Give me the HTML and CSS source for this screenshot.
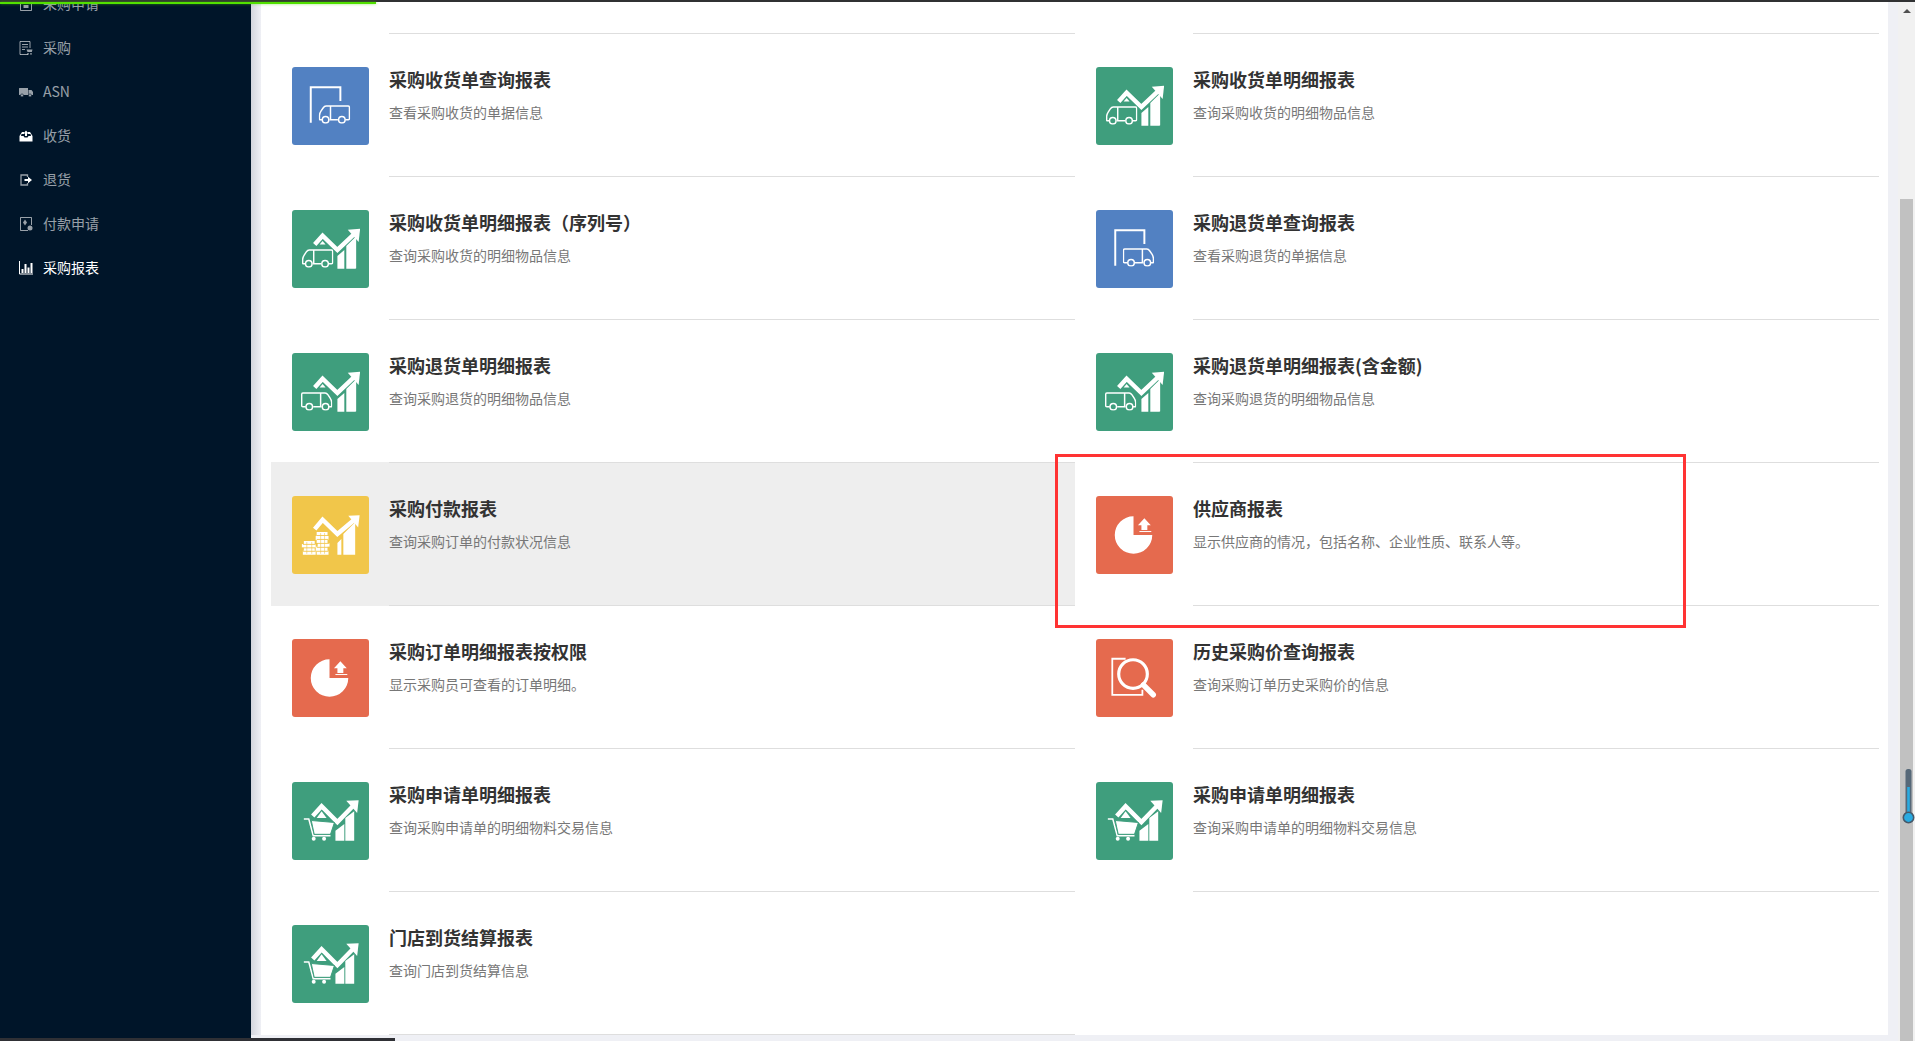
FILE: index.html
```html
<!DOCTYPE html>
<html lang="zh-CN">
<head>
<meta charset="utf-8">
<title>采购报表</title>
<link rel="stylesheet" href="styles.css">
</head>
<body>
<svg class="sprite" aria-hidden="true">
  <symbol id="chart" viewBox="0 0 78 78">
    <path d="M23 34.500 31 25.500 46 40 64 23" fill="none" stroke="#fff" stroke-width="4.500"/>
    <path d="M56.500 19.500 69 18.500 67.500 32Z" fill="#fff"/>
    <path d="M31 31 34 34.500H28Z" fill="#fff"/>
    <path d="M46 46 53 40V59H46ZM55 36 65 26V58.500Q65 59 64 59H55Z" fill="#fff"/>
  </symbol>
  <symbol id="truck-l" viewBox="0 0 32 19">
    <path d="M3.500 15H1.500Q.8 15 .8 14V10.500Q.8 8.500 2.500 6L4.500 3Q5.800 1 7.500 1H30Q31.200 1 31.200 2.500V14Q31.200 15 30 15H27M19.500 15H11M12 1V15" fill="none" stroke="#fff" stroke-width="1.500" stroke-linejoin="round"/>
    <circle cx="7" cy="15" r="3.300" fill="none" stroke="#fff" stroke-width="1.500"/>
    <circle cx="23.500" cy="15" r="3.300" fill="none" stroke="#fff" stroke-width="1.500"/>
  </symbol>
  <symbol id="truck-r" viewBox="0 0 32 19">
    <use href="#truck-l" width="32" height="19" transform="matrix(-1 0 0 1 32 0)"/>
  </symbol>
  <symbol id="dock-l" viewBox="0 0 78 78">
    <path d="M19 56V20H49V34" fill="none" stroke="#fff" stroke-width="2"/>
    <use href="#truck-l" x="27" y="38" width="32" height="19"/>
  </symbol>
  <symbol id="dock-r" viewBox="0 0 78 78">
    <path d="M19.500 56V20H49V34" fill="none" stroke="#fff" stroke-width="2"/>
    <use href="#truck-r" x="27" y="38" width="32" height="19"/>
  </symbol>
  <symbol id="truck-chart-l" viewBox="0 0 78 78">
    <use href="#chart" width="78" height="78"/>
    <use href="#truck-l" x="10" y="39" width="32" height="19"/>
  </symbol>
  <symbol id="truck-chart-r" viewBox="0 0 78 78">
    <use href="#chart" width="78" height="78"/>
    <use href="#truck-r" x="9" y="39" width="32" height="19"/>
  </symbol>
  <symbol id="coins-chart" viewBox="0 0 78 78">
    <path d="M23 33 31 23.500 46 38 65 22" fill="none" stroke="#fff" stroke-width="4.500"/>
    <path d="M57 19.500 68.500 19 67 31.500Z" fill="#fff"/>
    <path d="M46 47 50 43V59H46ZM52 38 64 26V59H52Z" fill="#fff"/>
    <path d="M12 45H23V48H24V52H23V55H24V59H11V55H12V52H10V48H12ZM25 36H36V40H37V44H36V47H38V51H36V55H37V59H25V55H24V51H26V47H25V44H24V40H25Z" fill="#fff"/>
    <path d="M11 48.500H24M10 52H24M11 55.500H24M25 39.500H37M25 43.500H37M25 47.500H38M25 51.500H38M25 55.500H37" stroke="#f1c64a" stroke-width=".9"/>
    <path d="M15 46V58M20 46V58M29 37V58M33 37V58" stroke="#f1c64a" stroke-width=".6"/>
  </symbol>
  <symbol id="pie" viewBox="0 0 78 78">
    <path d="M38 39V20A19 19 0 1 0 57 39Z" fill="#fff"/>
    <path d="M49 22 55.500 29H52V34H46V29H42.500Z" fill="#fff"/>
    <path d="M44 35.500H56" stroke="#fff"/>
  </symbol>
  <symbol id="search" viewBox="0 0 78 78">
    <path d="M30 19.500H16.500V56H47V51" fill="none" stroke="#fff" stroke-width="1.800"/>
    <circle cx="37.500" cy="35" r="14.500" fill="none" stroke="#fff" stroke-width="3.200"/>
    <path d="M48 46 58 56" stroke="#fff" stroke-width="5.500" stroke-linecap="round"/>
  </symbol>
  <symbol id="cart-chart" viewBox="0 0 78 78">
    <path d="M21 34 30 24 46 40 64 21.500" fill="none" stroke="#fff" stroke-width="4.500"/>
    <path d="M55 18.500 67.500 18 66 31Z" fill="#fff"/>
    <path d="M44 49 53 42V59H44ZM54 36 63 29V59H54Z" fill="#fff"/>
    <path d="M30 29 35 36H25Z" fill="#fff"/>
    <path d="M12 37H17L21.500 54H39" fill="none" stroke="#fff" stroke-width="1.500"/>
    <path d="M19.500 38.500 43 40.500 39 52.500H22.500Z" fill="#fff" stroke="#3f9e7d"/>
    <circle cx="22" cy="57" r="2" fill="#fff"/>
    <circle cx="32.500" cy="57" r="2" fill="#fff"/>
  </symbol>
  <symbol id="nav-apply" viewBox="0 0 14 14">
    <path d="M1.500 .5H12.500V13.500H1.500ZM4 3.500H10M4 6H10" fill="none" stroke="currentColor"/>
    <path d="M4.500 8H9.500V11H4.500Z" fill="currentColor"/>
  </symbol>
  <symbol id="nav-order" viewBox="0 0 14 14">
    <path d="M9 13.500H1V.5H11V7M3 3.500H9M3 6H9M3 8.500H6" fill="none" stroke="currentColor"/>
    <path d="M7.500 8.500H13.500L12.800 11H8.500Z" fill="currentColor"/>
    <circle cx="9" cy="12.800" r=".9" fill="currentColor"/>
    <circle cx="12" cy="12.800" r=".9" fill="currentColor"/>
  </symbol>
  <symbol id="nav-truck" viewBox="0 0 14 14">
    <path d="M0 3.500Q0 3 .5 3H9V10H.5Q0 10 0 9.500ZM9.500 5H12.500L14 7V10H9.500Z" fill="currentColor"/>
    <circle cx="3" cy="10.500" r="1.500" fill="currentColor" stroke="#001529" stroke-width=".7"/>
    <circle cx="11" cy="10.500" r="1.500" fill="currentColor" stroke="#001529" stroke-width=".7"/>
  </symbol>
  <symbol id="nav-inbox" viewBox="0 0 14 14">
    <path d="M.5 7 3 3H5V5H2.500L2 7H4.500L5.500 8.500H8.500L9.500 7H12L11.500 5H9V3H11L13.500 7V12.500H.5Z" fill="#fff"/>
    <path d="M7 1.500 9.500 4.500H8V7H6V4.500H4.500Z" fill="#fff"/>
  </symbol>
  <symbol id="nav-exit" viewBox="0 0 14 14">
    <path d="M8.500 4V2H2V12H8.500V10" fill="none" stroke="currentColor" stroke-width="1.300"/>
    <path d="M5.500 6H9V3.800L13 7 9 10.200V8H5.500Z" fill="#fff"/>
  </symbol>
  <symbol id="nav-pay" viewBox="0 0 14 14">
    <path d="M9 13.500H1.500V.5H12.500V8" fill="none" stroke="currentColor"/>
    <path d="M6 2.500 8 5.500 6 8.500 4 5.500Z" fill="currentColor"/>
    <circle cx="11" cy="11" r="2.500" fill="currentColor"/>
  </symbol>
  <symbol id="nav-bars" viewBox="0 0 14 14">
    <path d="M.5 0V13H14" fill="none" stroke="currentColor"/>
    <path d="M2.500 8H4.500V12H2.500ZM5.500 3H7.500V12H5.500ZM8.500 6.500H10.500V12H8.500ZM11.500 2H13.500V12H11.500Z" fill="currentColor"/>
  </symbol>
</svg>

<div class="topline"></div>
<div class="app">
  <aside class="sidebar">
    <ul class="nav">
      <li class="nav-item"><svg class="nav-icon"><use href="#nav-apply"/></svg><span>采购申请</span></li>
      <li class="nav-item"><svg class="nav-icon"><use href="#nav-order"/></svg><span>采购</span></li>
      <li class="nav-item"><svg class="nav-icon"><use href="#nav-truck"/></svg><span>ASN</span></li>
      <li class="nav-item"><svg class="nav-icon"><use href="#nav-inbox"/></svg><span>收货</span></li>
      <li class="nav-item"><svg class="nav-icon"><use href="#nav-exit"/></svg><span>退货</span></li>
      <li class="nav-item"><svg class="nav-icon"><use href="#nav-pay"/></svg><span>付款申请</span></li>
      <li class="nav-item nav-item--active"><svg class="nav-icon"><use href="#nav-bars"/></svg><span>采购报表</span></li>
    </ul>
  </aside>
  <main class="main">
    <section class="panel">
      <div class="reports">
        <div class="rule"></div>
        <div class="rule"></div>

        <article class="report">
          <svg class="tile tile--blue"><use href="#dock-l"/></svg>
          <div class="report-body"><h3>采购收货单查询报表</h3><p>查看采购收货的单据信息</p></div>
        </article>
        <article class="report">
          <svg class="tile tile--green"><use href="#truck-chart-l"/></svg>
          <div class="report-body"><h3>采购收货单明细报表</h3><p>查询采购收货的明细物品信息</p></div>
        </article>

        <article class="report">
          <svg class="tile tile--green"><use href="#truck-chart-l"/></svg>
          <div class="report-body"><h3>采购收货单明细报表（序列号）</h3><p>查询采购收货的明细物品信息</p></div>
        </article>
        <article class="report">
          <svg class="tile tile--blue"><use href="#dock-r"/></svg>
          <div class="report-body"><h3>采购退货单查询报表</h3><p>查看采购退货的单据信息</p></div>
        </article>

        <article class="report">
          <svg class="tile tile--green"><use href="#truck-chart-r"/></svg>
          <div class="report-body"><h3>采购退货单明细报表</h3><p>查询采购退货的明细物品信息</p></div>
        </article>
        <article class="report">
          <svg class="tile tile--green"><use href="#truck-chart-r"/></svg>
          <div class="report-body"><h3>采购退货单明细报表(含金额)</h3><p>查询采购退货的明细物品信息</p></div>
        </article>

        <article class="report report--hover">
          <svg class="tile tile--yellow"><use href="#coins-chart"/></svg>
          <div class="report-body"><h3>采购付款报表</h3><p>查询采购订单的付款状况信息</p></div>
        </article>
        <article class="report">
          <svg class="tile tile--red"><use href="#pie"/></svg>
          <div class="report-body"><h3>供应商报表</h3><p>显示供应商的情况，包括名称、企业性质、联系人等。</p></div>
        </article>

        <article class="report">
          <svg class="tile tile--red"><use href="#pie"/></svg>
          <div class="report-body"><h3>采购订单明细报表按权限</h3><p>显示采购员可查看的订单明细。</p></div>
        </article>
        <article class="report">
          <svg class="tile tile--red"><use href="#search"/></svg>
          <div class="report-body"><h3>历史采购价查询报表</h3><p>查询采购订单历史采购价的信息</p></div>
        </article>

        <article class="report">
          <svg class="tile tile--green"><use href="#cart-chart"/></svg>
          <div class="report-body"><h3>采购申请单明细报表</h3><p>查询采购申请单的明细物料交易信息</p></div>
        </article>
        <article class="report">
          <svg class="tile tile--green"><use href="#cart-chart"/></svg>
          <div class="report-body"><h3>采购申请单明细报表</h3><p>查询采购申请单的明细物料交易信息</p></div>
        </article>

        <article class="report">
          <svg class="tile tile--green"><use href="#cart-chart"/></svg>
          <div class="report-body"><h3>门店到货结算报表</h3><p>查询门店到货结算信息</p></div>
        </article>
      </div>
    </section>
  </main>
  <div class="scrollbar">
    <span class="scroll-arrow"></span>
    <span class="scroll-thumb"></span>
  </div>
</div>

<div class="loading-bar"></div>
<div class="h-scroll"></div>
<div class="annotation"></div>
<svg class="thermo" viewBox="0 0 13 56">
  <rect x="3.500" y="1" width="6" height="46" rx="2.500" fill="#566878"/>
  <rect x="5.200" y="19" width="2.600" height="30" fill="#29abe2"/>
  <circle cx="6.500" cy="49.500" r="5.200" fill="#29abe2" stroke="#46596a" stroke-width="1.600"/>
</svg>
</body>
</html>
```

FILE: styles.css
```css
* {
  box-sizing: border-box;
}

html,
body {
  margin: 0;
  height: 100%;
  overflow: hidden;
  background: #eff0f5;
  font-family: "Noto Sans CJK SC", "Noto Sans", sans-serif;
}

.sprite {
  display: none;
}

.topline {
  height: 2px;
  background: #303133;
}

.app {
  display: flex;
  height: 1039px;
}

/* Sidebar */
.sidebar {
  flex: 0 0 251px;
  height: 1036px;
  overflow: hidden;
  background: #001529;
}

.nav {
  list-style: none;
  margin: -20px 0 0;
  padding: 0;
}

.nav-item {
  display: flex;
  align-items: center;
  gap: 10px;
  height: 44px;
  padding-left: 19px;
  font-size: 14px;
  color: rgba(255, 255, 255, 0.6);
}

.nav-item span {
  margin-bottom: 2px;
}

.nav-item--active {
  color: #fff;
}

.nav-icon {
  flex: 0 0 14px;
  width: 14px;
  height: 14px;
}

/* Main */
.main {
  flex: 1;
  min-width: 0;
  height: 1033px;
  padding: 0 10px 0 10px;
  background: linear-gradient(90deg, #d3d5dd 0, #eff0f5 10px) no-repeat left top / 10px 100%;
}

.panel {
  height: 100%;
  overflow: hidden;
  background: #fff;
  padding: 31px 9px 0 10px;
}

.reports {
  display: grid;
  grid-template-columns: 804px 804px;
  grid-template-rows: 1px;
  grid-auto-rows: 143px;
}

.rule {
  margin-left: 118px;
  background: #dedede;
}

.report {
  position: relative;
  display: flex;
  padding-left: 21px;
}

.report--hover {
  background: #eee;
}

.report--hover::before {
  content: "";
  position: absolute;
  top: -1px;
  left: 0;
  width: 118px;
  height: 1px;
  background: #eee;
}

.tile {
  flex: 0 0 77px;
  width: 77px;
  height: 78px;
  margin: 33px 20px 0 0;
  border-radius: 3px;
}

.tile--blue {
  background: #5281c2;
}

.tile--green {
  background: #3f9e7d;
}

.tile--yellow {
  background: #f1c64a;
}

.tile--red {
  background: #e56a4e;
}

.report-body {
  flex: 1;
  min-width: 0;
  padding-top: 32px;
  border-bottom: 1px solid #dedede;
}

.report-body h3 {
  margin: 0;
  font-size: 18px;
  line-height: 26px;
  font-weight: 700;
  color: #333;
}

.report-body p {
  margin: 9px 0 0;
  font-size: 14px;
  line-height: 22px;
  color: #777;
}

/* Scrollbar */
.scrollbar {
  flex: 0 0 17px;
  display: flex;
  flex-direction: column;
  align-items: center;
  height: 1039px;
  background: #f1f1f1;
}

.scroll-arrow {
  width: 0;
  height: 0;
  margin-top: 7px;
  border-left: 4px solid transparent;
  border-right: 4px solid transparent;
  border-bottom: 4px solid #505050;
}

.scroll-thumb {
  width: 13px;
  height: 842px;
  margin-top: auto;
  background: #c1c1c1;
}

/* Overlays */
.loading-bar {
  position: absolute;
  top: 2px;
  left: 0;
  width: 376px;
  height: 2px;
  background: #52e000;
  box-shadow: 0 0 3px rgba(82, 224, 0, 0.6);
}

.h-scroll {
  position: absolute;
  left: 0;
  bottom: 0;
  width: 395px;
  height: 3px;
  background: #2f3035;
}

.annotation {
  position: absolute;
  top: 454px;
  left: 1055px;
  width: 631px;
  height: 174px;
  border: 3px solid #f33;
}

.thermo {
  position: absolute;
  top: 768px;
  left: 1902px;
  width: 13px;
  height: 56px;
}
```
